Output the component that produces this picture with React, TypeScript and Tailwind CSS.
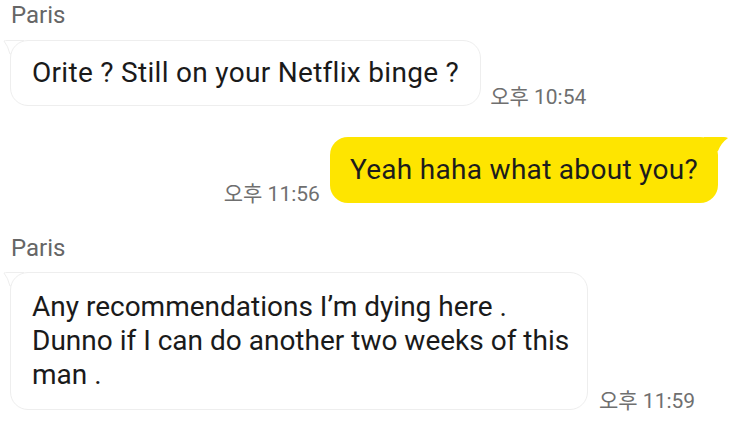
import React from "react";

const FONT = { fontFamily: 'Roboto, "Noto Sans CJK KR", sans-serif' };

// little speech tail, drawn at the top corner of a bubble
function Tail({ side, fill, stroke }: { side: "left" | "right"; fill: string; stroke?: string }) {
  if (side === "left") {
    return (
      <svg className="absolute -left-[8px] top-0" width="22" height="20" viewBox="0 0 22 20">
        <path d="M22 0.5 L6 0.5 Q3 0.5 2 1 Q6 6 8 14 L22 14 Z" fill={fill} stroke={stroke} strokeWidth="1" />
      </svg>
    );
  }
  return (
    <svg className="absolute -right-[10px] top-0" width="24" height="20" viewBox="0 0 24 20">
      <path d="M0 0 L20 0 Q22 0 24 1 Q17 6 14 14 L0 14 Z" fill={fill} />
    </svg>
  );
}

function Time({ children }: { children: React.ReactNode }) {
  return <span className="text-[21px] leading-[24px] -mb-[3px] text-[#6f6f6f] whitespace-nowrap">{children}</span>;
}

export default function App() {
  return (
    <div className="w-[737px] h-[437px] bg-white overflow-hidden" style={FONT}>
      <div className="pl-[11px] text-[24px] leading-[30px] text-[#666]">Paris</div>

      <div className="flex items-end gap-[9px] pl-[10px] mt-[10px]">
        <div className="relative">
          <Tail side="left" fill="#fff" stroke="#eeeeee" />
          <div className="relative bg-white border border-[#eeeeee] rounded-[18px] px-[21px] py-[15px] text-[28px] leading-[34px] tracking-[0.3px] text-[#1a1a1a]">
            Orite ? Still on your Netflix binge ?
          </div>
        </div>
        <Time>오후 10:54</Time>
      </div>

      <div className="flex items-end justify-end gap-[10px] pr-[19px] mt-[31px]">
        <Time>오후 11:56</Time>
        <div className="relative">
          <Tail side="right" fill="#fee500" />
          <div className="relative bg-[#fee500] rounded-[18px] px-[20px] py-[16px] text-[28px] leading-[34px] tracking-[0.3px] text-[#1c1c1c]">
            Yeah haha what about you?
          </div>
        </div>
      </div>

      <div className="pl-[11px] mt-[30px] text-[24px] leading-[30px] text-[#666]">Paris</div>

      <div className="flex items-end gap-[11px] pl-[10px] mt-[9px]">
        <div className="relative">
          <Tail side="left" fill="#fff" stroke="#eeeeee" />
          <div className="relative bg-white border border-[#eeeeee] rounded-[18px] w-[578px] px-[21px] py-[17px] text-[28px] leading-[34px] text-[#1a1a1a] whitespace-nowrap">
            Any recommendations I’m dying here .<br />
            Dunno if I can do another two weeks of this<br />
            man .
          </div>
        </div>
        <Time>오후 11:59</Time>
      </div>
    </div>
  );
}
